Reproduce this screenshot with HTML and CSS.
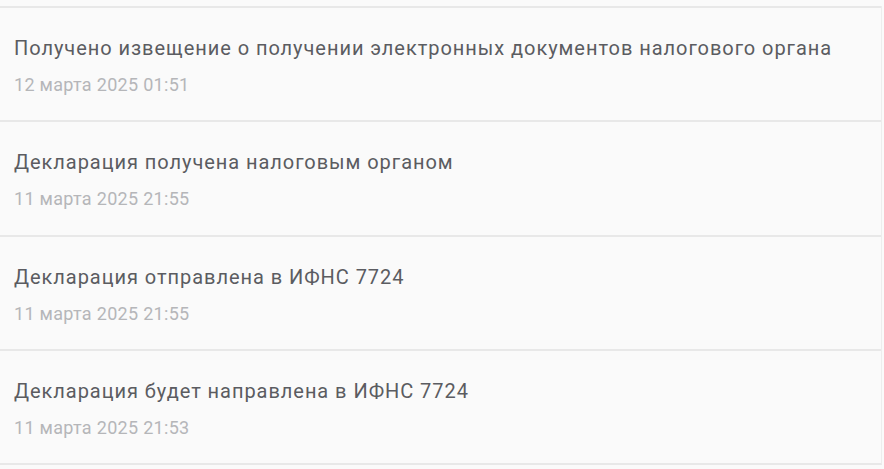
FILE: index.html
```html
<!DOCTYPE html>
<html lang="ru">
<head>
  <meta charset="UTF-8" />
  <title>История</title>
  <link rel="stylesheet" href="styles.css">
</head>
<body>
  <ul class="history">
    <li class="history-item">
      <div class="item-title">Получено извещение о получении электронных документов налогового органа</div>
      <div class="item-date">12 марта 2025 01:51</div>
    </li>
    <li class="history-item">
      <div class="item-title">Декларация получена налоговым органом</div>
      <div class="item-date">11 марта 2025 21:55</div>
    </li>
    <li class="history-item">
      <div class="item-title">Декларация отправлена в ИФНС 7724</div>
      <div class="item-date">11 марта 2025 21:55</div>
    </li>
    <li class="history-item">
      <div class="item-title">Декларация будет направлена в ИФНС 7724</div>
      <div class="item-date">11 марта 2025 21:53</div>
    </li>
  </ul>
</body>
</html>
```

FILE: styles.css
```css
* { margin: 0; padding: 0; box-sizing: border-box; }
body {
  font-family: Roboto, "Noto Sans", Arial, sans-serif;
  background-color: #fafafa;
  color: #5f6065;
  padding-top: 6px;
}
.history {
  list-style: none;
  width: 882px;
  border-right: 1px solid #ededed;
  border-bottom: 2px solid #e8e8e8;
}
.history-item {
  border-top: 2px solid #e8e8e8;
  height: 114.3px;
  padding: 28px 14px 0;
}
.item-title {
  font-size: 20px;
  line-height: 24px;
  letter-spacing: 0.95px;
  color: #5b5c61;
  white-space: nowrap;
}
.item-date {
  margin-top: 15px;
  font-size: 18px;
  line-height: 20px;
  letter-spacing: 0.3px;
  color: #b5b6b9;
}
```
